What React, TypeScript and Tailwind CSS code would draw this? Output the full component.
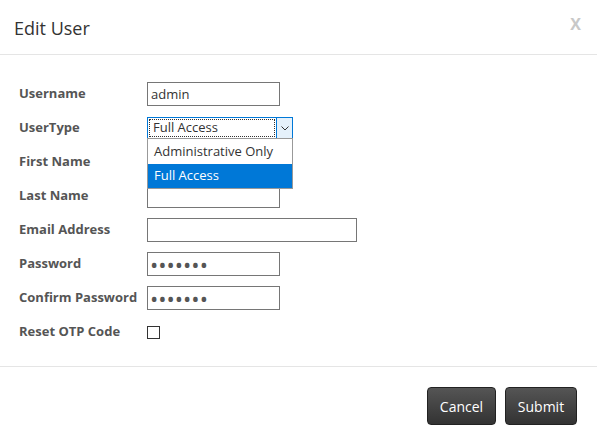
import { useState } from 'react';

const rows = [
  { label: 'Username', kind: 'text', value: 'admin', width: 'w-[133px]' },
  { label: 'UserType', kind: 'select' },
  { label: 'First Name', kind: 'text', value: '', width: 'w-[133px]' },
  { label: 'Last Name', kind: 'text', value: '', width: 'w-[133px]' },
  { label: 'Email Address', kind: 'text', value: '', width: 'w-[210px]' },
  { label: 'Password', kind: 'password', value: 'secret1', width: 'w-[133px]' },
  { label: 'Confirm Password', kind: 'password', value: 'secret1', width: 'w-[133px]' },
  { label: 'Reset OTP Code', kind: 'checkbox' },
];

function UserTypeSelect() {
  const [value, setValue] = useState('Full Access');
  const options = ['Administrative Only', 'Full Access'];
  return (
    <div className="relative w-[146px] h-[22px]">
      <div className="flex h-full border border-[#0078d7] bg-white">
        <div className="flex-1 m-[1px] border border-dotted border-[#333] flex items-center pl-[3px] text-[13px] text-[#333]">
          {value}
        </div>
        <div className="w-[16px] border-l border-[#0078d7] bg-[#e5f1fb] flex items-center justify-center">
          <svg width="8" height="5" viewBox="0 0 8 5" fill="none">
            <path d="M0.5 0.5 L4 4 L7.5 0.5" stroke="#333" strokeWidth="1" />
          </svg>
        </div>
      </div>
      <div className="absolute left-0 top-[21px] w-[146px] z-10 border border-[#999] bg-white">
        {options.map((opt) => (
          <div
            key={opt}
            onClick={() => setValue(opt)}
            className={
              opt === value
                ? 'h-[24px] flex items-center pl-[6px] text-[13px] bg-[#0078d7] text-white'
                : 'h-[25px] flex items-center pl-[6px] text-[13px] text-[#333]'
            }
          >
            {opt}
          </div>
        ))}
      </div>
    </div>
  );
}

export default function App() {
  return (
    <div className="w-[597px] h-[445px] bg-white font-['Open_Sans',sans-serif] flex flex-col">
      <div className="h-[55px] border-b border-[#e5e5e5] flex items-center justify-between pl-[14px] pr-[16px]">
        <h4 className="text-[18px] text-[#333] leading-none pt-[1px]">Edit User</h4>
        <span className="text-[16px] font-bold text-[#c8c8c8] leading-none pb-[6px]">X</span>
      </div>

      <div className="flex flex-col pt-[22px] pb-[17px]">
        {rows.map((row) => (
          <div key={row.label} className="h-[34px] flex items-center">
            <label className="w-[147px] pl-[19px] text-[13px] font-bold text-[#555]">{row.label}</label>
            {row.kind === 'select' && <UserTypeSelect />}
            {row.kind === 'text' && (
              <input
                type="text"
                defaultValue={row.value}
                className={`${row.width} h-[24px] border border-[#767676] px-[3px] text-[13px] text-[#333] outline-none`}
              />
            )}
            {row.kind === 'password' && (
              <input
                type="password"
                defaultValue={row.value}
                className={`${row.width} h-[24px] border border-[#767676] px-[2px] text-[22px] tracking-[0px] text-[#555] outline-none`}
              />
            )}
            {row.kind === 'checkbox' && (
              <span className="w-[13px] h-[13px] border border-[#333] bg-white" />
            )}
          </div>
        ))}
      </div>

      <div className="border-t border-[#e5e5e5] flex justify-end gap-[9px] pt-[20px] pr-[20px]">
        <button className="w-[69px] h-[38px] rounded-[4px] border border-[#222] bg-gradient-to-b from-[#555] to-[#333] text-white text-[14px]">
          Cancel
        </button>
        <button className="w-[72px] h-[38px] rounded-[4px] border border-[#222] bg-gradient-to-b from-[#555] to-[#333] text-white text-[14px]">
          Submit
        </button>
      </div>
    </div>
  );
}
